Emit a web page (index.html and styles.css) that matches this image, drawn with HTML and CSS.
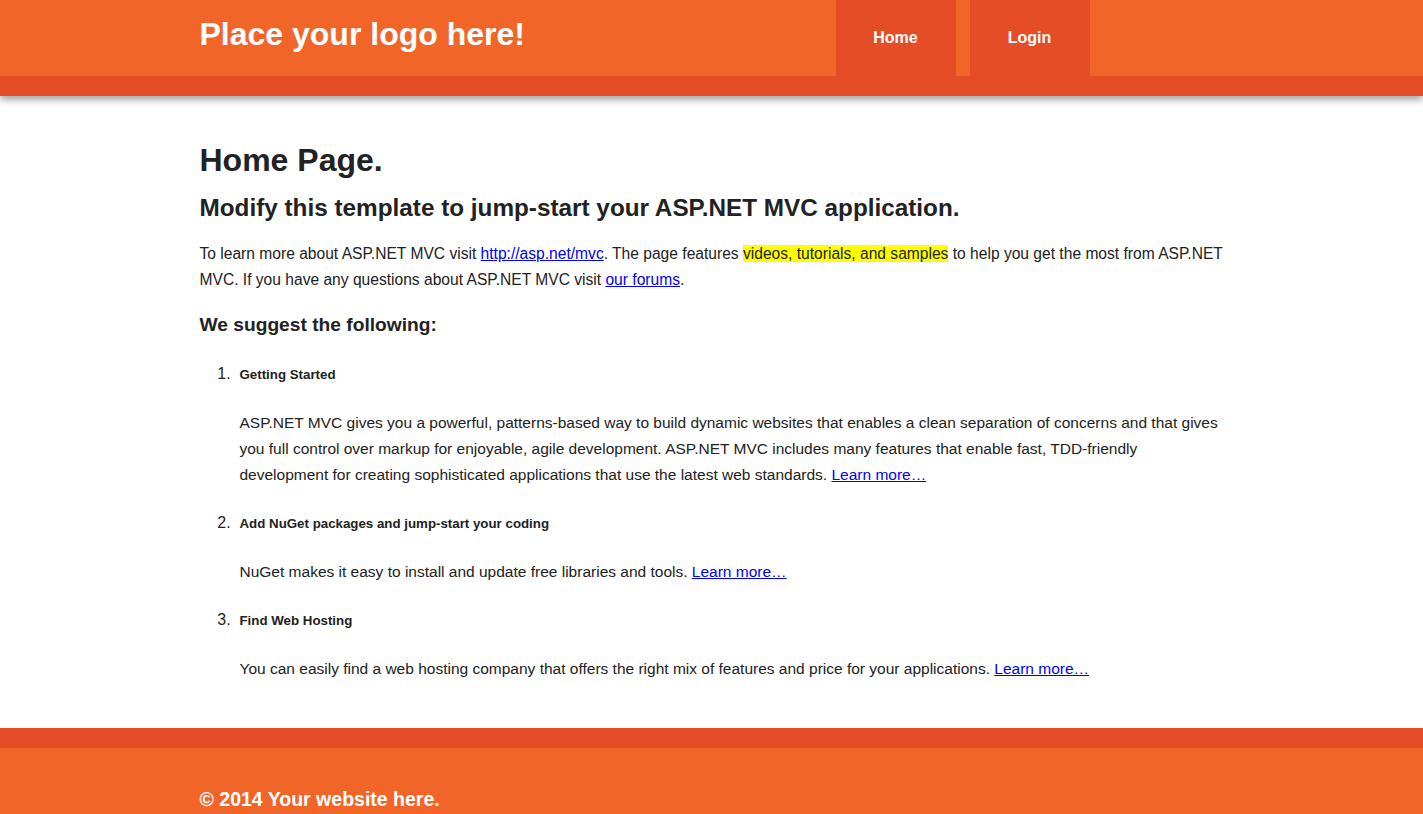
FILE: index.html
```html
<!DOCTYPE html>
<html lang="en">
<head>
<meta charset="utf-8">
<title>Home Page</title>
<link rel="stylesheet" href="styles.css">
</head>
<body>
<header class="site-header">
  <div class="container header-inner">
    <p class="site-title">Place your logo here!</p>
    <nav class="main-nav">
      <a href="#" class="nav-item">Home</a>
      <a href="#" class="nav-item">Login</a>
    </nav>
  </div>
</header>

<main class="container content">
  <h1 class="page-title">Home Page.</h1>
  <h2 class="page-subtitle">Modify this template to jump-start your ASP.NET MVC application.</h2>
  <p class="intro">To learn more about ASP.NET MVC visit <a href="#">http://asp.net/mvc</a>. The page features <mark class="hl">videos, tutorials, and samples</mark> to help you get the most from ASP.NET MVC. If you have any questions about ASP.NET MVC visit <a href="#">our forums</a>.</p>
  <h3 class="suggest">We suggest the following:</h3>
  <ol class="steps">
    <li>
      <h5 class="step-title">Getting Started</h5>
      <p class="step-text">ASP.NET MVC gives you a powerful, patterns-based way to build dynamic websites that enables a clean separation of concerns and that gives you full control over markup for enjoyable, agile development. ASP.NET MVC includes many features that enable fast, TDD-friendly development for creating sophisticated applications that use the latest web standards. <a href="#">Learn more…</a></p>
    </li>
    <li>
      <h5 class="step-title">Add NuGet packages and jump-start your coding</h5>
      <p class="step-text">NuGet makes it easy to install and update free libraries and tools. <a href="#">Learn more…</a></p>
    </li>
    <li>
      <h5 class="step-title">Find Web Hosting</h5>
      <p class="step-text">You can easily find a web hosting company that offers the right mix of features and price for your applications. <a href="#">Learn more…</a></p>
    </li>
  </ol>
</main>

<footer class="site-footer">
  <div class="container">
    <p class="copyright">© 2014 Your website here.</p>
  </div>
</footer>
</body>
</html>
```

FILE: styles.css
```css
html, body {
  margin: 0;
  padding: 0;
}

body {
  font-family: "Liberation Sans", Arial, sans-serif;
  color: #222;
  background: #fff;
}

.container {
  width: 1024px;
  margin: 0 auto;
}

a {
  color: #0000ff;
  text-decoration: underline;
}

/* Header */
.site-header {
  background: #f16529;
  border-bottom: 20px solid #e44d26;
  box-shadow: 0 4px 7px rgba(0, 0, 0, 0.35);
  position: relative;
  z-index: 1;
}

.header-inner {
  display: flex;
  align-items: stretch;
  height: 76px;
}

.site-title {
  margin: 0;
  padding-top: 15px;
  font-size: 32px;
  line-height: 38px;
  font-weight: bold;
  color: #fff;
}

.main-nav {
  display: flex;
  gap: 14px;
  margin-left: auto;
  margin-right: 134px;
}

.nav-item {
  display: block;
  width: 120px;
  background: #e44d26;
  color: #fff;
  text-decoration: none;
  font-size: 16px;
  font-weight: bold;
  text-align: center;
  line-height: 76px;
}

/* Content */
.content {
  padding-top: 45px;
  padding-bottom: 46px;
}

.page-title {
  margin: 0;
  font-size: 32px;
  line-height: 38px;
  font-weight: bold;
}

.page-subtitle {
  margin: 14px 0 0;
  font-size: 24.3px;
  line-height: 30px;
  font-weight: bold;
}

.intro {
  margin: 18px 0 0;
  font-size: 15.6px;
  line-height: 26px;
}

.hl {
  background: #ffff00;
  color: #222;
}

.suggest {
  margin: 20px 0 0;
  font-size: 19.2px;
  line-height: 24px;
  font-weight: bold;
}

.steps {
  margin: 28px 0 0;
  padding-left: 40px;
}

.steps li {
  font-size: 15.5px;
  line-height: 18px;
}

.steps li::marker {
  content: counter(list-item) ".\00a0\00a0";
  font-size: 16px;
}

.steps li + li {
  margin-top: 26px;
}

.step-title {
  margin: 0;
  font-size: 13.3px;
  line-height: 18px;
  font-weight: bold;
}

.step-text {
  margin: 26px 0 0;
  font-size: 15.5px;
  line-height: 26px;
}

/* Footer */
.site-footer {
  background: #f16529;
  border-top: 20px solid #e44d26;
  padding-top: 39px;
  padding-bottom: 30px;
}

.copyright {
  margin: 0;
  color: #fff;
  font-size: 19.5px;
  line-height: 24px;
  font-weight: bold;
}
```
